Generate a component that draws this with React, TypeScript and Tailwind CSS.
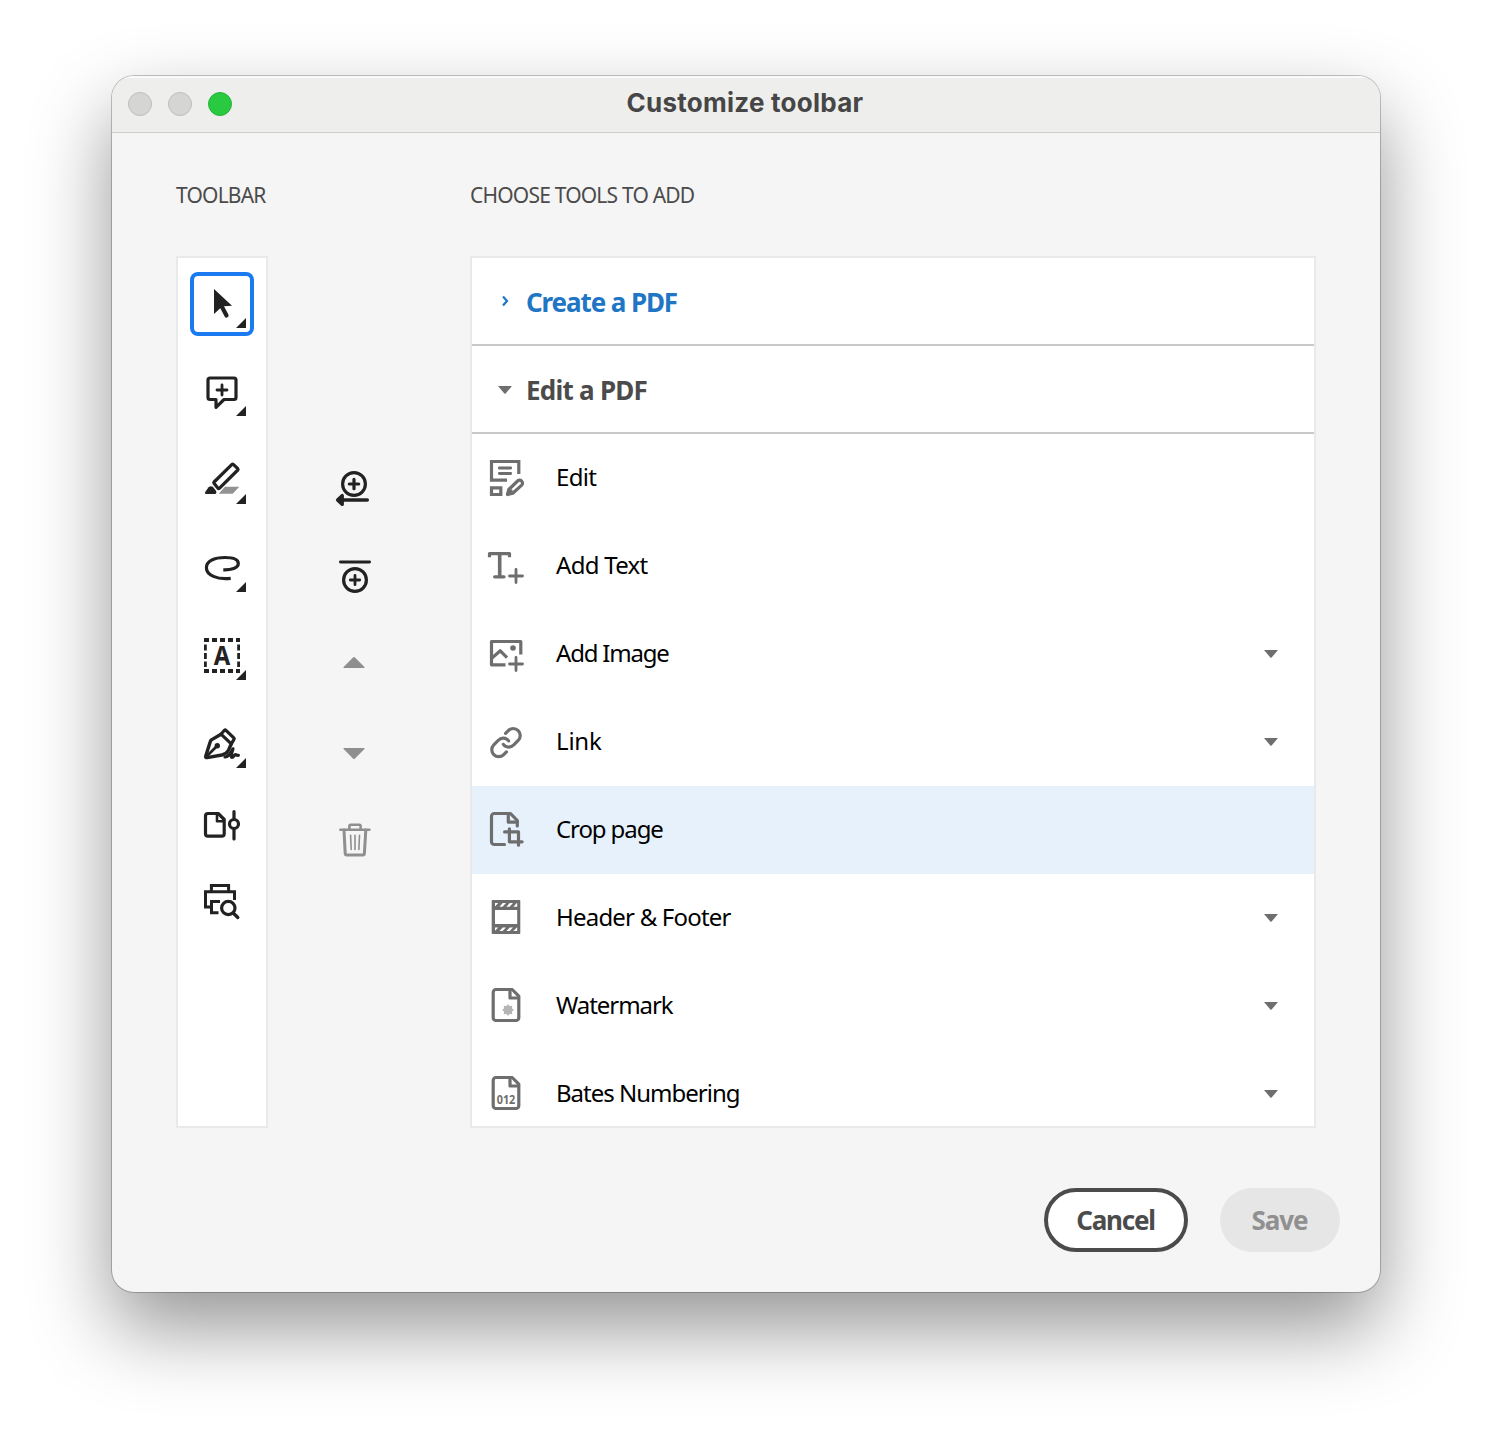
import type { ReactNode } from "react";
import clsx from "clsx";

const Caret = ({ className }: { className?: string }) => (
  <svg width="14" height="8" viewBox="0 0 14 8" className={clsx("text-[#6e6e6e]", className)}>
    <path d="M0.6 0H13.4Q14 0 13.6 0.5L7.4 7.7Q7 8 6.6 7.7L0.4 0.5Q0 0 0.6 0Z" fill="currentColor" />
  </svg>
);

const strokeProps = {
  fill: "none",
  stroke: "currentColor",
  strokeWidth: 3.2,
  strokeLinecap: "round",
  strokeLinejoin: "round",
} as const;

/* ---------- left toolbar ---------- */

type ToolProps = { active?: boolean; small?: boolean; flyout?: boolean; label: string; children: ReactNode };

function Tool({ active, small, flyout, label, children }: ToolProps) {
  const height = small ? 52 : 64;
  return (
    <button
      aria-label={label}
      className={clsx(
        "w-16 shrink-0 rounded-lg text-[#222222]",
        small ? "h-[52px]" : "h-16",
        active && "inset-ring-4 inset-ring-[#1a7af0]"
      )}
    >
      <svg width="64" height={height} viewBox={`0 0 64 ${height}`} {...strokeProps}>
        {children}
        {flyout && <path d="M56 46V56H46Z" fill="currentColor" stroke="none" />}
      </svg>
    </button>
  );
}

function Toolbar() {
  return (
    <div className="flex h-[872px] w-[92px] flex-col items-center gap-6 border-2 border-[#e9e9e9] bg-white pt-[14px]">
      <Tool label="Select" active flyout>
        <path d="M24 17L42 33.8L34 34.2L30.5 36L24 42Z" fill="currentColor" stroke="none" />
        <path d="M31.5 34L36.5 43.5" strokeWidth="4.2" />
      </Tool>
      <Tool label="Add comment" flyout>
        <path d="M20 18H44A2 2 0 0 1 46 20V37.5A2 2 0 0 1 44 39.5H34L26 47.3V39.5H20A2 2 0 0 1 18 37.5V20A2 2 0 0 1 20 18Z" />
        <path d="M32 25V35M27 30H37" strokeWidth="2.8" />
      </Tool>
      <Tool label="Highlight" flyout>
        <path d="M42 16.4Q42.6 15.8 43.3 16.4L47.8 20.7Q48.4 21.4 47.8 22L29.3 40.4Q28.6 41 28 40.3L24 35.3Q23.5 34.6 24.1 34Z" />
        <path d="M15.2 44L18.6 39.2Q20.6 37.4 22.8 38.8L26.2 43Q26.8 45.9 25 46H16Q14.4 45.9 15.2 44Z" fill="currentColor" stroke="none" />
        <path d="M35 38.7H49.3L42.7 45.7H28.7Z" fill="#929292" stroke="none" />
      </Tool>
      <Tool label="Draw" flyout>
        <path
          d="M40.7 42.4C27 44 16.4 39 16.4 31.8C16.4 25.2 24 21.5 35 21.5C43 21.5 48.3 23.5 48.3 27.5C48.3 32 41 34.1 33.3 33.8"
          strokeLinecap="butt"
        />
      </Tool>
      <Tool label="Select text" flyout>
        <g strokeLinecap="butt">
          <path d="M14 16H50M14 47H50" strokeWidth="4" strokeDasharray="5 3" />
          <path d="M15.4 14V18M48.6 14V18M15.4 45V49M48.6 45V49" strokeWidth="2.8" />
          <path d="M15.4 20.5V43M48.6 20.5V43" strokeWidth="2.8" strokeDasharray="6 2.5" />
        </g>
        <text
          x="32"
          y="41"
          textAnchor="middle"
          textLength="16.5"
          lengthAdjust="spacingAndGlyphs"
          fill="currentColor"
          stroke="none"
          className="font-['Noto_Sans',sans-serif] text-[26px] font-bold"
        >
          A
        </text>
      </Tool>
      <Tool label="Sign" flyout>
        <path d="M31 22.2L21.8 27.6Q20.6 28.4 20.3 29.5L15.7 44.2Q15.4 46 17.2 45.6L31.8 43Q36.6 41.8 38.5 38.2L41.3 31.8" strokeWidth="3.4" />
        <path d="M31 22.2L34.4 18.3Q35.2 17.5 36 18.3L43.8 25.8Q44.6 26.6 44 27.4L41.3 31.8Z" />
        <path d="M17 44L27 34" strokeWidth="2.8" />
        <circle cx="27.3" cy="33.7" r="2.7" fill="currentColor" stroke="none" />
        <path d="M35 45C39 45.2 41.5 40 43 36.8C41.6 41 40.4 45.4 42 45.4C43.8 45.4 44 42.6 45.6 42.6C46.8 42.6 46.4 43.8 48.4 43.3" />
      </Tool>
      <Tool label="Organize pages" small>
        <path d="M18 13.5H28.2L34.2 19.5V33.7A2.5 2.5 0 0 1 31.7 36.2H18A2.5 2.5 0 0 1 15.5 33.7V16A2.5 2.5 0 0 1 18 13.5Z" />
        <path d="M27 14.5V21.3H33.5" strokeWidth="2.6" />
        <path d="M44 11.5V19M44 29V39" />
        <circle cx="44" cy="24" r="4.5" />
      </Tool>
      <Tool label="Print preview" small>
        <g strokeLinecap="butt" strokeLinejoin="miter">
          <path d="M21.4 15V9.6H38.6V15" strokeWidth="3" />
          <path d="M20.5 30.9H15.5V15.7H44.5V24" strokeWidth="3" />
          <path d="M30 25.5H21.5V36.7H28.5" strokeWidth="3" />
        </g>
        <circle cx="38.3" cy="32" r="6.7" />
        <path d="M43.2 37L47.8 41.4" strokeWidth="3.4" />
      </Tool>
    </div>
  );
}

/* ---------- middle actions ---------- */

function Action({ label, disabled, children }: { label: string; disabled?: boolean; children: ReactNode }) {
  return (
    <button aria-label={label} disabled={disabled} className={clsx("size-16", disabled ? "text-[#8f8f8f]" : "text-[#222222]")}>
      <svg width="64" height="64" viewBox="0 0 64 64" {...strokeProps}>
        {children}
      </svg>
    </button>
  );
}

function Actions() {
  return (
    <div className="mt-[200px] ml-[54px] flex flex-col gap-6">
      <Action label="Add to toolbar">
        <circle cx="32" cy="28" r="11.4" />
        <path d="M32 23.3V32.7M27.3 28H36.7" />
        <path d="M19 44H45.3" strokeWidth="3.5" />
        <path d="M15.5 44L20.3 39.5V48.5Z" fill="currentColor" />
      </Action>
      <Action label="Add separator">
        <path d="M18.4 18H47.6" strokeWidth="2.8" />
        <circle cx="33" cy="36" r="11.4" />
        <path d="M33 31.3V40.7M28.3 36H37.7" strokeWidth="2.8" />
      </Action>
      <Action label="Move up" disabled>
        <path d="M31 25.5Q32 24.5 33 25.5L42.4 35Q43 36 42 36H22Q21 36 21.6 35Z" fill="currentColor" stroke="none" />
      </Action>
      <Action label="Move down" disabled>
        <path d="M31 38.5Q32 39.5 33 38.5L42.4 29Q43 28 42 28H22Q21 28 21.6 29Z" fill="currentColor" stroke="none" />
      </Action>
      <Action label="Delete" disabled>
        <path d="M18.4 21.7H47.4M27.4 20.8V18Q27.4 16.7 28.8 16.7H37.3Q38.6 16.7 38.6 18V20.8" strokeWidth="2.6" />
        <path d="M22 22L23.2 45.4Q23.3 47 24.9 47H40.8Q42.3 47 42.4 45.4L43.8 22" strokeWidth="3" />
        <path d="M28.6 27.2L29.2 41.5M33 27.2V41.5M37.5 27.2L36.9 41.5" strokeWidth="1.6" />
      </Action>
    </div>
  );
}

/* ---------- tool list ---------- */

const PageOutline = () => (
  <>
    <path d="M14 7.5H30.2L36.8 14.2V35.7A2.8 2.8 0 0 1 34 38.5H14A2.8 2.8 0 0 1 11.2 35.7V10.3A2.8 2.8 0 0 1 14 7.5Z" />
    <path d="M28 8V16H36.5" />
  </>
);

const stripes = "M13 9H16.2L13 12.4ZM17.4 12.7L20.8 9H24L20.6 12.7ZM24.4 12.7L27.8 9H31L27.6 12.7ZM31.4 12.7L34.8 9H35.2V12.7Z";

const items: { name: string; tracking: string; menu?: boolean; selected?: boolean; icon: ReactNode }[] = [
  {
    name: "Edit",
    tracking: "tracking-[-0.7px]",
    icon: (
      <>
        <g strokeLinecap="butt" strokeLinejoin="miter">
          <path d="M36.8 20V7.5H9.5V26.2H25" />
          <path d="M9.5 33.8H18.8V40.5H9.5Z" />
        </g>
        <path d="M17.3 14H28.7M17.3 19.5H28.7" strokeWidth="2.8" />
        <path d="M25.5 40.5L26.8 35.5L35.6 27A2.9 2.9 0 0 1 39.7 31.1L30.8 39.3Z" />
        <path d="M26 40L29 37" />
      </>
    ),
  },
  {
    name: "Add Text",
    tracking: "tracking-[-0.7px]",
    icon: (
      <>
        <path d="M7.5 15.2V11.6H27.5V15.2" strokeLinecap="butt" />
        <path d="M17.7 12V34.5" strokeWidth="3.6" />
        <path d="M12.6 34.8H22" />
        <path d="M34 27.5V40.5M27.5 34H40.5" strokeWidth="2.8" />
      </>
    ),
  },
  {
    name: "Add Image",
    tracking: "tracking-[-1.2px] word-spacing-normal",
    menu: true,
    icon: (
      <>
        <path d="M23.5 34.8H9.5V11.5H38.8V24.5" strokeLinecap="butt" />
        <path d="M10 28L18.3 20.8L25 27.6" strokeLinecap="butt" />
        <circle cx="31" cy="18" r="2.8" fill="currentColor" stroke="none" />
        <path d="M34 27.5V40.5M27.5 34H40.5" strokeWidth="2.8" />
      </>
    ),
  },
  {
    name: "Link",
    tracking: "tracking-[-0.2px]",
    menu: true,
    icon: (
      <g transform="translate(6.6 7.2) scale(1.45)" strokeWidth="2.2">
        <path d="M10.2 13.2a4.6 4.6 0 0 0 7.2.3l3-3a4.8 4.8 0 0 0-6.8-6.8l-1.9 1.9" />
        <path d="M13.8 10.8a4.6 4.6 0 0 0-7.2-.3l-3 3a4.8 4.8 0 0 0 6.8 6.8l1.9-1.9" />
      </g>
    ),
  },
  {
    name: "Crop page",
    tracking: "tracking-[-1.1px]",
    selected: true,
    icon: (
      <>
        <path d="M22.5 38.5H12.3A2.8 2.8 0 0 1 9.5 35.7V10.3A2.8 2.8 0 0 1 12.3 7.5H28.5L35.3 14.5V20" />
        <path d="M26.3 8V16.2H35" />
        <path d="M27.4 22.8V35.8H40.1M22.6 25.9H36.5V39.2" />
      </>
    ),
  },
  {
    name: "Header & Footer",
    tracking: "tracking-[-0.8px]",
    menu: true,
    icon: (
      <g stroke="none">
        <rect x="9.7" y="6" width="28.6" height="34" rx="1" fill="currentColor" />
        <rect x="13" y="16" width="22.2" height="14" fill="white" />
        <path d={stripes} fill="white" />
        <path d={stripes} fill="white" transform="translate(0 24.4)" />
      </g>
    ),
  },
  {
    name: "Watermark",
    tracking: "tracking-[-1.05px]",
    menu: true,
    icon: (
      <>
        <PageOutline />
        <path
          d="M26 22L27.5 24L30.2 23.8L30 26.5L32 28L30 29.5L30.2 32.2L27.5 32L26 34L24.5 32L21.8 32.2L22 29.5L20 28L22 26.5L21.8 23.8L24.5 24Z"
          fill="#b5b5b5"
          stroke="none"
        />
      </>
    ),
  },
  {
    name: "Bates Numbering",
    tracking: "tracking-[-1px]",
    menu: true,
    icon: (
      <>
        <PageOutline />
        <text
          x="24"
          y="34"
          textAnchor="middle"
          textLength="18.6"
          lengthAdjust="spacingAndGlyphs"
          fill="currentColor"
          stroke="none"
          className="font-['Noto_Sans',sans-serif] text-[12px] font-bold"
        >
          012
        </text>
      </>
    ),
  },
];

function ToolList() {
  return (
    <div className="ml-[84px] h-[872px] w-[846px] overflow-hidden border-2 border-[#e9e9e9] bg-white">
      <div className="flex h-[88px] items-center border-b-2 border-[#c9c9c9] pt-[2px] pl-[26px] text-[26px] font-bold text-[#2076c5]">
        <svg width="14" height="14" viewBox="0 0 14 14" className="-mt-[3px] mr-[14px]" fill="none" stroke="currentColor" strokeWidth="2.2">
          <path d="M5 2.6L9 7L5 11.4" />
        </svg>
        <span className="tracking-[-1.1px]">Create a PDF</span>
      </div>
      <div className="flex h-[88px] items-center border-b-2 border-[#c9c9c9] pt-[2px] pl-[26px] text-[26px] font-bold text-[#4b4b4b]">
        <Caret className="mr-[14px]" />
        <span className="tracking-[-0.75px]">Edit a PDF</span>
      </div>
      {items.map((item) => (
        <div key={item.name} className={clsx("flex h-[88px] items-center pr-9 pl-[10px]", item.selected && "bg-[#e7f1fc]")}>
          <svg width="48" height="48" viewBox="0 0 48 48" {...strokeProps} className="text-[#6e6e6e]">
            {item.icon}
          </svg>
          <span className={clsx("ml-[26px] pb-[2px] text-[24px] text-black", item.tracking)}>{item.name}</span>
          {item.menu && <Caret className="ml-auto" />}
        </div>
      ))}
    </div>
  );
}

export default function App() {
  return (
    <div className="flex h-[1440px] w-[1492px] items-start overflow-hidden bg-white pt-[76px] pl-[112px] font-['Noto_Sans','Open_Sans',sans-serif]">
      <div className="flex h-[1216px] w-[1268px] flex-col overflow-hidden rounded-[22px] bg-[#f5f5f5] shadow-[0_0_0_1px_rgba(0,0,0,0.22),0_36px_80px_rgba(0,0,0,0.42)]">
        <header className="flex h-[57px] shrink-0 items-center border-b border-[#cfcfcf] bg-[#eeeeec] px-4 inset-shadow-[0_2px_0_#f9f9f9]">
          <div className="flex w-[200px] gap-4">
            <span className="size-6 rounded-full border border-[#bdbdbd] bg-[#d5d5d4]" />
            <span className="size-6 rounded-full border border-[#bdbdbd] bg-[#d5d5d4]" />
            <span className="size-6 rounded-full border border-[#24b53b] bg-[#29c940]" />
          </div>
          <h1 className="-mt-[3px] flex-1 text-center font-[Inter,sans-serif] text-[26px] font-bold tracking-[0.25px] text-[#464646]">
            Customize toolbar
          </h1>
          <div className="w-[202px]" />
        </header>
        <div className="flex h-[123px] shrink-0 items-start pt-[46px] pl-16 text-[21px] leading-8 text-[#4b4b4b]">
          <h2 className="w-[294px] tracking-[-0.8px]">TOOLBAR</h2>
          <h2 className="tracking-[-0.8px]">CHOOSE TOOLS TO ADD</h2>
        </div>
        <div className="flex items-start pl-16">
          <Toolbar />
          <Actions />
          <ToolList />
        </div>
        <div className="mt-[60px] flex justify-end gap-8 pr-10 text-[26px] font-bold">
          <button className="h-16 w-36 rounded-full border-4 border-[#4b4b4b] bg-white pr-px tracking-[-1.2px] text-[#4b4b4b]">Cancel</button>
          <button className="h-16 w-[120px] rounded-full bg-[#e6e6e6] pr-px tracking-[-1.1px] text-[#909090]">Save</button>
        </div>
      </div>
    </div>
  );
}
